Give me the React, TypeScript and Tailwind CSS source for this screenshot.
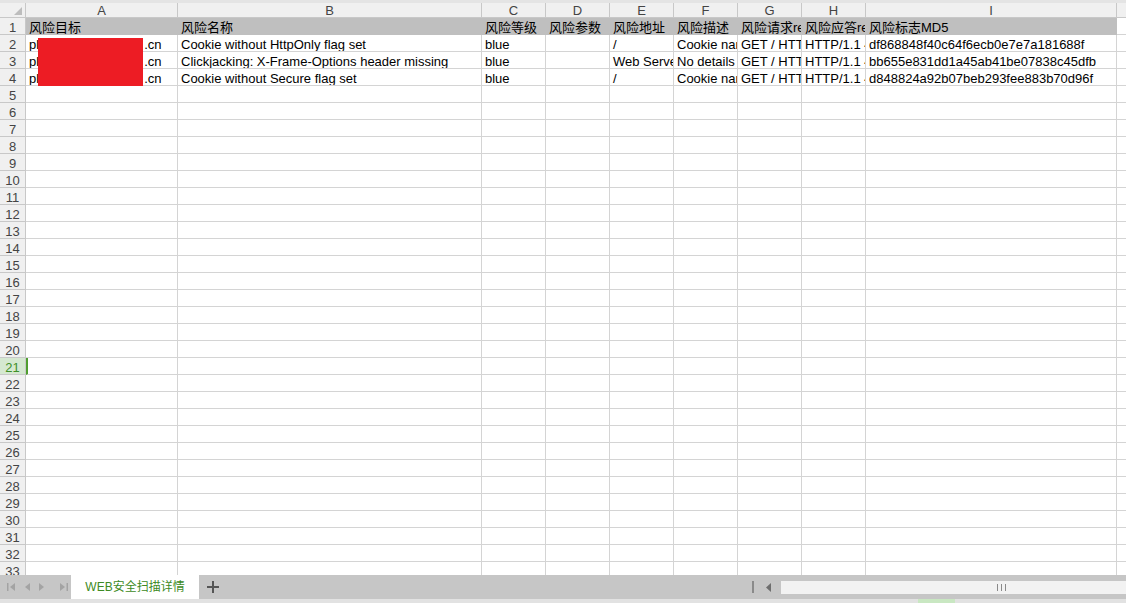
import React from "react";

const cols = [
  { key: "A", w: "w-[152px]" },
  { key: "B", w: "w-[304px]" },
  { key: "C", w: "w-[64px]" },
  { key: "D", w: "w-[64px]" },
  { key: "E", w: "w-[64px]" },
  { key: "F", w: "w-[64px]" },
  { key: "G", w: "w-[64px]" },
  { key: "H", w: "w-[64px]" },
  { key: "I", w: "w-[251px]" },
];

const headerRow = [
  "风险目标",
  "风险名称",
  "风险等级",
  "风险参数",
  "风险地址",
  "风险描述",
  "风险请求request",
  "风险应答response",
  "风险标志MD5",
];

const dataRows: string[][] = [
  [
    "",
    "Cookie without HttpOnly flag set",
    "blue",
    "",
    "/",
    "Cookie name: JSESSIONID",
    "GET / HTTP/1.1",
    "HTTP/1.1 403",
    "df868848f40c64f6ecb0e7e7a181688f",
  ],
  [
    "",
    "Clickjacking: X-Frame-Options header missing",
    "blue",
    "",
    "Web Server",
    "No details are available.",
    "GET / HTTP/1.1",
    "HTTP/1.1 403",
    "bb655e831dd1a45ab41be07838c45dfb",
  ],
  [
    "",
    "Cookie without Secure flag set",
    "blue",
    "",
    "/",
    "Cookie name: JSESSIONID",
    "GET / HTTP/1.1",
    "HTTP/1.1 403",
    "d848824a92b07beb293fee883b70d96f",
  ],
];

const font = "font-['Liberation_Sans','Noto_Sans_CJK_SC',sans-serif]";
const cellText = " pl-[3px] pt-[2px] whitespace-nowrap overflow-hidden flex items-center leading-none";

function RowNum({ n, active }: { n: number; active?: boolean }) {
  return (
    <div
      className={
        "w-[26px] shrink-0 h-full flex items-center justify-center pt-[2px] leading-none border-r border-b border-[#c8c8c8] text-[13px] " +
        (active ? "bg-[#d5e8d0] text-[#3f8f2a]" : "bg-[#f0f0f0] text-[#444]")
      }
    >
      {n}
    </div>
  );
}

function TargetCell() {
  return (
    <span className="flex">
      <span>pl</span>
      <span className="inline-block w-[105px]" />
      <span>.cn</span>
    </span>
  );
}

export default function App() {
  return (
    <div className={"w-[1126px] h-[603px] overflow-hidden bg-white flex flex-col " + font}>
      <div className="h-[3px] bg-[#e4e4e4] shrink-0" />

      {/* column letters */}
      <div className="h-[15px] shrink-0 flex bg-[#f0f0f0] text-[13px] text-[#444]">
        <div className="w-[26px] shrink-0 border-r border-b border-[#c8c8c8] flex items-end justify-end pr-[3px] pb-[2px]">
          <svg width="8" height="8" viewBox="0 0 8 8">
            <polygon points="8,0 8,8 0,8" fill="#bdbdbd" />
          </svg>
        </div>
        {cols.map((c) => (
          <div
            key={c.key}
            className={c.w + " shrink-0 border-r border-b border-[#c8c8c8] flex items-center justify-center pt-[1px] leading-none"}
          >
            {c.key}
          </div>
        ))}
        <div className="flex-1 border-b border-[#c8c8c8]" />
      </div>

      {/* grid */}
      <div className="relative flex-1 overflow-hidden text-[13px] text-black">
        <div className="h-[17px] flex">
          <RowNum n={1} />
          {cols.map((c, i) => (
            <div
              key={c.key}
              className={c.w + " shrink-0 h-full bg-[#bfbfbf] border-r border-b border-[#bfbfbf]" + cellText}
            >
              {headerRow[i]}
            </div>
          ))}
          <div className="flex-1 border-b border-[#d4d4d4]" />
        </div>

        {dataRows.map((r, ri) => (
          <div key={ri} className="h-[17px] flex">
            <RowNum n={ri + 2} />
            {cols.map((c, i) => (
              <div
                key={c.key}
                className={c.w + " shrink-0 h-full border-r border-b border-[#d4d4d4]" + cellText}
              >
                {i === 0 ? <TargetCell /> : r[i]}
              </div>
            ))}
            <div className="flex-1 border-b border-[#d4d4d4]" />
          </div>
        ))}

        {Array.from({ length: 29 }, (_, k) => k + 5).map((n) => (
          <div key={n} className="h-[17px] flex">
            <RowNum n={n} active={n === 21} />
            {cols.map((c, i) => (
              <div
                key={c.key}
                className={
                  c.w +
                  " shrink-0 h-full border-r border-b border-[#d4d4d4] " +
                  (n === 21 && i === 0 ? "border-l-2 border-l-[#4f9e2f]" : "")
                }
              />
            ))}
            <div className="flex-1 border-b border-[#d4d4d4]" />
          </div>
        ))}

        {/* redaction box */}
        <div className="absolute left-[38px] top-[20px] w-[105px] h-[48px] bg-[#ed1c24]" />
      </div>

      {/* sheet tabs bar */}
      <div className="h-[24px] shrink-0 bg-[#c6c6c6] flex items-stretch">
        <div className="w-[71px] flex items-center gap-[7px] pl-[6px]">
          <svg width="10" height="10" viewBox="0 0 10 10">
            <rect x="1" y="1" width="1.5" height="8" fill="#a3a3a3" />
            <polygon points="9,1 9,9 4,5" fill="#a3a3a3" />
          </svg>
          <svg width="8" height="10" viewBox="0 0 8 10">
            <polygon points="7,1 7,9 2,5" fill="#a3a3a3" />
          </svg>
          <svg width="8" height="10" viewBox="0 0 8 10">
            <polygon points="1,1 1,9 6,5" fill="#a3a3a3" />
          </svg>
          <svg width="10" height="10" viewBox="0 0 10 10" className="ml-[6px]">
            <polygon points="1,1 1,9 6,5" fill="#a3a3a3" />
            <rect x="7.5" y="1" width="1.5" height="8" fill="#a3a3a3" />
          </svg>
        </div>
        <div className="w-[128px] bg-white flex items-center justify-center text-[12px] text-[#3d8a24]">
          WEB安全扫描详情
        </div>
        <div className="w-[28px] flex items-center justify-center">
          <svg width="12" height="12" viewBox="0 0 12 12">
            <rect x="5" y="0" width="2" height="12" fill="#555" />
            <rect x="0" y="5" width="12" height="2" fill="#555" />
          </svg>
        </div>
        <div className="flex-1" />
        <div className="w-[30px] flex items-center gap-[12px] pl-[1px]">
          <div className="w-[2px] h-[12px] bg-[#8a8a8a]" />
          <svg width="5" height="9" viewBox="0 0 5 9">
            <polygon points="5,0 5,9 0,4.5" fill="#6e6e6e" />
          </svg>
        </div>
        <div className="w-[345px] flex items-center">
          <div className="w-full h-[13px] bg-[#f2f2f2] flex items-center pl-[216px] gap-[3px]">
            <div className="w-px h-[7px] bg-[#8a8a8a]" />
            <div className="w-px h-[7px] bg-[#8a8a8a]" />
            <div className="w-px h-[7px] bg-[#8a8a8a]" />
          </div>
        </div>
      </div>
      <div className="h-[4px] shrink-0 bg-[#e2e2e2] flex">
        <div className="w-[918px]" />
        <div className="w-[37px] bg-[#c9e7c2]" />
      </div>
    </div>
  );
}
